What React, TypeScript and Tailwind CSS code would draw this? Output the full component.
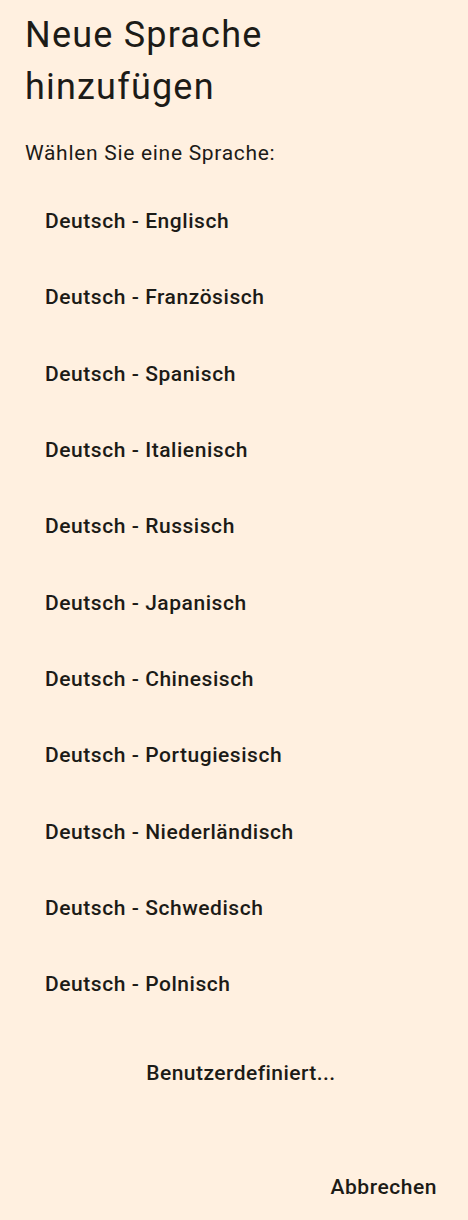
import React from "react";

const pairs = [
  "Deutsch - Englisch",
  "Deutsch - Französisch",
  "Deutsch - Spanisch",
  "Deutsch - Italienisch",
  "Deutsch - Russisch",
  "Deutsch - Japanisch",
  "Deutsch - Chinesisch",
  "Deutsch - Portugiesisch",
  "Deutsch - Niederländisch",
  "Deutsch - Schwedisch",
  "Deutsch - Polnisch",
];

export default function App() {
  return (
    <div
      className="w-[468px] h-[1220px] bg-[#fff0e0] text-[#1c1b17] flex flex-col overflow-hidden"
      style={{ fontFamily: "Roboto, 'Noto Sans', sans-serif" }}
    >
      <h1 className="pl-[25px] pr-[20px] pt-[9px] text-[36px] leading-[52px] tracking-[1.2px] font-normal">
        Neue Sprache
        <br />
        hinzufügen
      </h1>
      <p className="pl-[25px] mt-[26px] text-[21px] leading-[28px] tracking-[0.7px]">
        Wählen Sie eine Sprache:
      </p>
      <ul className="mt-[16px] flex flex-col">
        {pairs.map((p) => (
          <li key={p} className="h-[76.3px] flex items-center pl-[45px]">
            <span className="text-[21px] leading-[28px] tracking-[0.55px] font-medium">{p}</span>
          </li>
        ))}
      </ul>
      <div className="pl-[45px] pr-[31px] mt-[37px] flex justify-center">
        <button className="text-[21px] leading-[28px] tracking-[0.45px] font-medium">
          Benutzerdefiniert...
        </button>
      </div>
      <div className="pr-[31px] mt-[86px] flex justify-end">
        <button className="text-[21px] leading-[28px] tracking-[0.55px] font-medium">Abbrechen</button>
      </div>
    </div>
  );
}
